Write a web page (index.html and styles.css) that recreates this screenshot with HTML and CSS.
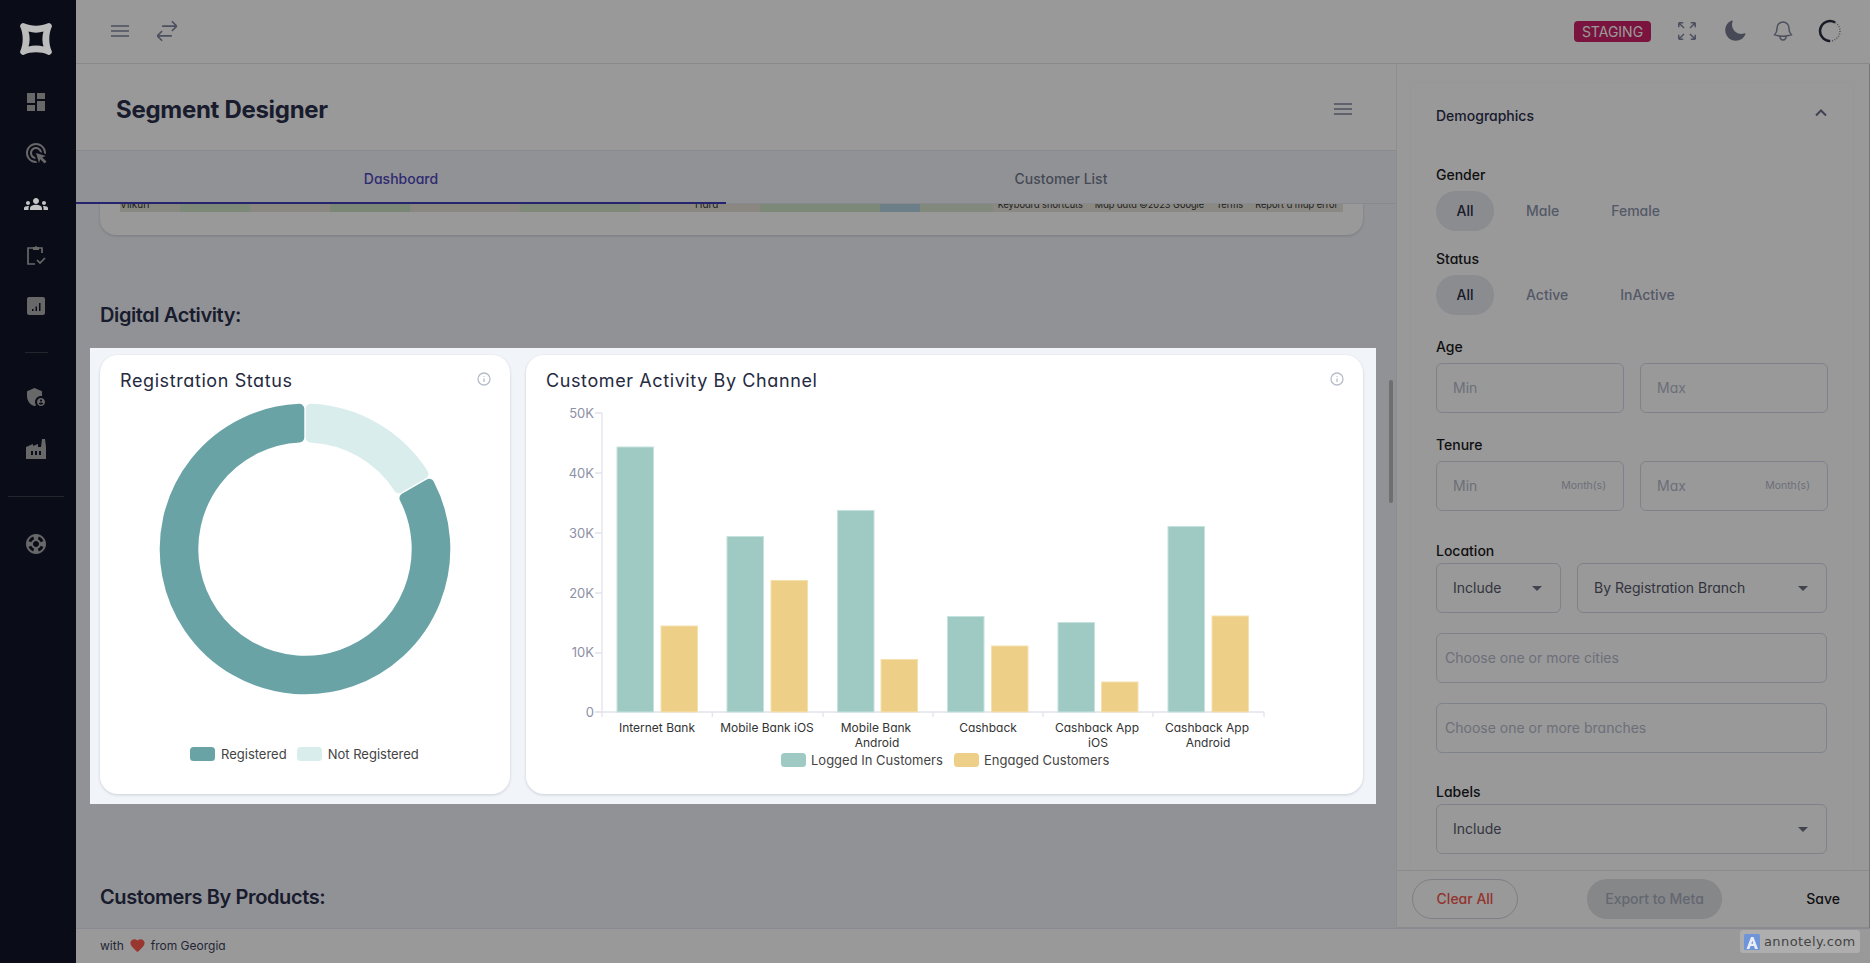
FILE: index.html
```html
<!DOCTYPE html>
<html lang="en">
<head>
<meta charset="utf-8">
<title>Segment Designer</title>
<link rel="stylesheet" href="styles.css">
</head>
<body>
<div class="shell">
  <aside class="sidebar">
    <svg class="logo raised" viewBox="0 0 32 32"><path fill-rule="evenodd" d="M4 .3C11 3.500 21 3.500 28 .3q1.500-.6 2.500.4l.8.8q1 1 .4 2.500C28.500 11 28.500 21 31.700 28q.6 1.500-.4 2.500l-.8.8q-1 1-2.500.4C21 28.500 11 28.500 4 31.700q-1.500.6-2.500-.4l-.8-.8q-1-1-.4-2.500C3.500 21 3.500 11 .3 4q-.6-1.500.4-2.500l.8-.8q1-1 2.500-.4ZM8.500 8.500C13 10 19 10 23.500 8.500C22 13 22 19 23.500 23.500C19 22 13 22 8.500 23.500C10 19 10 13 8.500 8.500Z"/></svg>
    <nav class="nav nav-main">
      <svg class="nav-icon" viewBox="0 0 24 24"><path d="M3 13h8V3H3v10zm0 8h8v-6H3v6zm10 0h8V11h-8v10zm0-18v6h8V3h-8z"/></svg>
      <svg class="nav-icon" viewBox="0 0 24 24"><path d="M11.71 17.99C8.53 17.84 6 15.22 6 12c0-3.31 2.69-6 6-6 3.22 0 5.84 2.53 5.99 5.71l-2.1-.63C15.48 9.31 13.89 8 12 8c-2.21 0-4 1.79-4 4 0 1.89 1.31 3.48 3.08 3.89l.63 2.1zM22 12c0 .3-.01.6-.04.9l-1.97-.59c.01-.1.01-.21.01-.31 0-4.42-3.58-8-8-8s-8 3.58-8 8 3.58 8 8 8c.1 0 .21 0 .31-.01l.59 1.97c-.3.03-.6.04-.9.04-5.52 0-10-4.48-10-10S6.48 2 12 2s10 4.48 10 10zm-3.77 4.26L22 15l-10-3 3 10 1.26-3.77 4.27 4.27 1.98-1.98-4.28-4.26z"/></svg>
      <svg class="nav-icon nav-active raised" viewBox="0 0 24 24"><path d="M12 12.75c1.63 0 3.07.39 4.24.9 1.08.48 1.76 1.56 1.76 2.73V18H6v-1.61c0-1.18.68-2.26 1.76-2.73 1.17-.52 2.61-.91 4.24-.91zM4 13c1.1 0 2-.9 2-2s-.9-2-2-2-2 .9-2 2 .9 2 2 2zm1.13 1.1c-.37-.06-.74-.1-1.13-.1-.99 0-1.93.21-2.78.58C.48 14.9 0 15.62 0 16.43V18h4.5v-1.61c0-.83.23-1.61.63-2.29zM20 13c1.1 0 2-.9 2-2s-.9-2-2-2-2 .9-2 2 .9 2 2 2zm4 3.43c0-.81-.48-1.53-1.22-1.85-.85-.37-1.79-.58-2.78-.58-.39 0-.76.04-1.13.1.4.68.63 1.46.63 2.29V18H24v-1.57zM12 6c1.66 0 3 1.34 3 3s-1.34 3-3 3-3-1.34-3-3 1.34-3 3-3z"/></svg>
      <svg class="nav-icon nav-stroke" viewBox="0 0 24 24"><path d="M18 10V5h-3M9 5H4v16h7"/><path class="nav-fillpart" d="M9 4h2a1 1 0 0 1 2 0h2v3H9z"/><path d="M13 17l3 3 5-5"/></svg>
      <svg class="nav-icon" viewBox="0 0 24 24"><path fill-rule="evenodd" d="M5 3h14c1.1 0 2 .9 2 2v14c0 1.1-.9 2-2 2H5c-1.100 0-2-.9-2-2V5c0-1.100.9-2 2-2zM8 15v2h1.500v-2zM11.500 12.500V17H13v-4.500zM15 9v8h1.500V9z"/></svg>
    </nav>
    <hr class="rule rule-short">
    <nav class="nav nav-sec">
      <svg class="nav-icon" viewBox="0 0 24 24"><path d="M17 11c.34 0 .67.04 1 .09V6.270L10.500 3 3 6.270v4.910c0 4.540 3.200 8.790 7.500 9.820.55-.13 1.080-.32 1.600-.55-.69-.98-1.100-2.170-1.100-3.450 0-3.310 2.690-6 6-6z"/><path d="M17 13c-2.210 0-4 1.790-4 4s1.790 4 4 4 4-1.790 4-4-1.790-4-4-4zm0 1.380c.62 0 1.120.51 1.120 1.120s-.51 1.120-1.120 1.120-1.120-.51-1.120-1.120.5-1.120 1.120-1.120zm0 5.370c-.93 0-1.740-.46-2.240-1.170.05-.72 1.510-1.080 2.240-1.080s2.190.36 2.240 1.080c-.5.71-1.310 1.170-2.240 1.170z"/></svg>
      <svg class="nav-icon" viewBox="0 0 24 24"><path fill-rule="evenodd" d="M22 10l-1-8h-3l-1 8h-3V7l-5 2V7l-7 3v12h20V10zM9 18H7v-4h2zm4 0h-2v-4h2zm4 0h-2v-4h2z"/></svg>
    </nav>
    <hr class="rule rule-long">
    <svg class="nav-icon" viewBox="0 0 24 24"><path d="M12 2C6.480 2 2 6.480 2 12s4.480 10 10 10 10-4.480 10-10S17.520 2 12 2zm7.460 7.120-2.780 1.150c-.51-1.360-1.580-2.440-2.950-2.940l1.150-2.780c2.100.8 3.770 2.470 4.580 4.570zM12 15c-1.660 0-3-1.340-3-3s1.340-3 3-3 3 1.340 3 3-1.340 3-3 3zM9.130 4.540l1.170 2.780c-1.380.5-2.470 1.590-2.980 2.970L4.540 9.130c.81-2.110 2.480-3.780 4.590-4.590zM4.540 14.870l2.780-1.150c.51 1.380 1.590 2.460 2.970 2.960l-1.170 2.780c-2.100-.81-3.770-2.480-4.580-4.590zm10.340 4.590-1.150-2.780c1.370-.51 2.450-1.590 2.950-2.970l2.780 1.170c-.81 2.100-2.480 3.770-4.580 4.580z"/></svg>
  </aside>

  <header class="topbar">
    <svg class="top-icon top-menu" viewBox="0 0 18 12"><path d="M0 1h18M0 6h18M0 11h18"/></svg>
    <svg class="top-icon top-swap" viewBox="0 0 24 24"><path d="M7.500 21L3 16.500m0 0L7.500 12M3 16.500h13.500m0-13.500L21 7.500m0 0L16.500 12M21 7.500H7.500"/></svg>
    <span class="badge-staging">STAGING</span>
    <svg class="top-icon top-action" viewBox="0 0 24 24"><path d="M3.750 3.750v4.500m0-4.500h4.500m-4.500 0L9 9M3.750 20.250v-4.500m0 4.500h4.500m-4.500 0L9 15M20.250 3.750h-4.500m4.500 0v4.500m0-4.500L15 9m5.250 11.250h-4.500m4.500 0v-4.500m0 4.500L15 15"/></svg>
    <svg class="top-action moon" viewBox="0 0 24 24"><path d="M9.528 1.718a.75.75 0 01.162.819A8.970 8.970 0 009 6a9 9 0 009 9 8.970 8.970 0 003.463-.69.75.75 0 01.981.980 10.503 10.503 0 01-9.694 6.460c-5.799 0-10.500-4.701-10.500-10.500 0-4.368 2.667-8.112 6.460-9.694a.75.75 0 01.818.162z"/></svg>
    <svg class="top-icon top-action" viewBox="0 0 24 24"><path d="M14.857 17.082a23.848 23.848 0 005.454-1.310A8.967 8.967 0 0118 9.750V9A6 6 0 006 9v.750a8.967 8.967 0 01-2.312 6.022c1.733.64 3.560 1.085 5.455 1.310m5.714 0a24.255 24.255 0 01-5.714 0m5.714 0a3 3 0 11-5.714 0"/></svg>
    <svg class="avatar" viewBox="0 0 24 24"><circle class="avatar-dash" cx="12" cy="12" r="10"/><path class="avatar-arc" d="M17 3.300A10 10 0 1 0 12 22"/></svg>
  </header>

  <main class="content">
    <div class="title-bar">
      <h1 class="page-title">Segment Designer</h1>
      <svg class="top-icon title-menu" viewBox="0 0 18 12"><path d="M0 1h18M0 6h18M0 11h18"/></svg>
    </div>
    <div class="tabs">
      <div class="tab tab-active">Dashboard</div>
      <div class="tab">Customer List</div>
    </div>
    <div class="scroll">
      <section class="map-card">
        <div class="map-strip">
          <span class="map-label map-left">Vilkuri</span>
          <span class="map-label map-mid">Hara</span>
          <span class="map-attrib"><span>Keyboard shortcuts</span><span>Map data ©2023 Google</span><span>Terms</span><span>Report a map error</span></span>
        </div>
      </section>
      <h2 class="section-title section-digital">Digital Activity:</h2>
      <div class="chart-grid">
        <article class="card">
          <div class="card-head">
            <h3 class="card-title">Registration Status</h3>
            <svg class="info" viewBox="0 0 14 14"><circle cx="7" cy="7" r="6"/><path d="M7 6.500v3.500M7 4v.8"/></svg>
          </div>
          <svg class="donut" viewBox="0 0 300 300">
            <g transform="translate(150 150)">
              <path class="slice slice-a" d="M124.250 -65.150A140.300 140.300 0 1 1 -5.700 -140.180L-5.700 -111.550A111.700 111.700 0 1 0 99.450 -50.840Z"/>
              <path class="slice slice-b" d="M5.700 -140.180A140.300 140.300 0 0 1 118.550 -75.030L93.750 -60.720A111.700 111.700 0 0 0 5.700 -111.550Z"/>
            </g>
          </svg>
          <div class="legend legend-donut">
            <span class="swatch swatch-a"></span><span class="legend-text">Registered</span>
            <span class="swatch swatch-b"></span><span class="legend-text">Not Registered</span>
          </div>
        </article>
        <article class="card">
          <div class="card-head">
            <h3 class="card-title">Customer Activity By Channel</h3>
            <svg class="info" viewBox="0 0 14 14"><circle cx="7" cy="7" r="6"/><path d="M7 6.500v3.500M7 4v.8"/></svg>
          </div>
          <svg class="bars" viewBox="526 405 837 389">
            <g class="axis">
              <path d="M602 413V717M595 413h7M595 473h7M595 533h7M595 593h7M595 653h7M595 712h7"/>
              <path d="M595 712H1264M712.300 712v5M823 712v5M933 712v5M1043 712v5M1153 712v5M1264 712v5"/>
            </g>
            <g class="y-labels">
              <text x="594" y="418">50K</text><text x="594" y="478">40K</text><text x="594" y="538">30K</text>
              <text x="594" y="598">20K</text><text x="594" y="657">10K</text><text x="594" y="717">0</text>
            </g>
            <g class="bar-a">
              <rect x="617" y="447" width="36.500" height="265"/><rect x="727" y="536.500" width="36.500" height="175.500"/>
              <rect x="837.500" y="510.500" width="36.500" height="201.500"/><rect x="947.500" y="616.500" width="36.500" height="95.500"/>
              <rect x="1058" y="622.500" width="36.500" height="89.500"/><rect x="1168" y="526.500" width="36.500" height="185.500"/>
            </g>
            <g class="bar-b">
              <rect x="661" y="626" width="36.500" height="86"/><rect x="771" y="580.500" width="36.500" height="131.500"/>
              <rect x="881" y="659.500" width="36.500" height="52.500"/><rect x="991.500" y="646" width="36.500" height="66"/>
              <rect x="1101.500" y="682" width="36.500" height="30"/><rect x="1212" y="616" width="36.500" height="96"/>
            </g>
            <g class="x-labels">
              <text x="657" y="732">Internet Bank</text>
              <text x="767" y="732">Mobile Bank iOS</text>
              <text x="876" y="732">Mobile Bank</text><text x="877" y="747">Android</text>
              <text x="988" y="732">Cashback</text>
              <text x="1097" y="732">Cashback App</text><text x="1098" y="747">iOS</text>
              <text x="1207" y="732">Cashback App</text><text x="1208" y="747">Android</text>
            </g>
            <rect class="legend-a" x="781" y="753" width="25" height="14" rx="3.500"/>
            <text class="legend-svg" x="811" y="765">Logged In Customers</text>
            <rect class="legend-b" x="954" y="753" width="25" height="14" rx="3.500"/>
            <text class="legend-svg" x="984" y="765">Engaged Customers</text>
          </svg>
        </article>
      </div>
      <h2 class="section-title section-products">Customers By Products:</h2>
      <div class="scroll-thumb"></div>
    </div>
  </main>

  <aside class="panel">
    <div class="panel-body">
      <div class="panel-card">
        <div class="panel-head">
          <span class="panel-title">Demographics</span>
          <svg class="chev" viewBox="0 0 12 8"><path d="M1 6.500L6 1.500l5 5"/></svg>
        </div>
        <div class="field-label label-gender">Gender</div>
        <div class="chips">
          <span class="chip chip-on">All</span><span class="chip">Male</span><span class="chip">Female</span>
        </div>
        <div class="field-label label-status">Status</div>
        <div class="chips">
          <span class="chip chip-on">All</span><span class="chip">Active</span><span class="chip">InActive</span>
        </div>
        <div class="field-label label-age">Age</div>
        <div class="pair">
          <div class="input input-num">Min</div>
          <div class="input input-num">Max</div>
        </div>
        <div class="field-label label-age">Tenure</div>
        <div class="pair">
          <div class="input input-num">Min<span class="unit">Month(s)</span></div>
          <div class="input input-num">Max<span class="unit">Month(s)</span></div>
        </div>
        <div class="field-label label-loc">Location</div>
        <div class="selects">
          <div class="input select select-small">Include<i class="caret"></i></div>
          <div class="input select select-wide">By Registration Branch<i class="caret"></i></div>
        </div>
        <div class="input input-multi">Choose one or more cities</div>
        <div class="input input-multi">Choose one or more branches</div>
        <div class="field-label label-loc">Labels</div>
        <div class="input select select-last">Include<i class="caret"></i></div>
      </div>
    </div>
    <div class="panel-foot">
      <button class="btn btn-clear">Clear All</button>
      <button class="btn btn-export">Export to Meta</button>
      <button class="btn btn-save">Save</button>
    </div>
  </aside>

  <footer class="foot">
    <span>with</span>
    <svg class="heart" viewBox="0 0 24 24"><path d="M12 21.350l-1.450-1.320C5.400 15.360 2 12.280 2 8.500 2 5.420 4.420 3 7.500 3c1.740 0 3.410.81 4.500 2.090C13.090 3.810 14.760 3 16.500 3 19.580 3 22 5.420 22 8.500c0 3.780-3.400 6.860-8.550 11.540L12 21.350z"/></svg>
    <span>from Georgia</span>
  </footer>

  <div class="spotlight"></div>
  <div class="annotely">
    <svg class="annotely-logo" viewBox="0 0 16 16"><rect width="16" height="16" rx="1.500"/><path d="M2.500 15L7 3h2.500l4.500 12h-3l-1-3H6.500l-1 3zM7.300 9.800h2L8.300 6.700z"/></svg>
    <span>annotely.com</span>
  </div>
</div>
</body>
</html>
```

FILE: styles.css
```css
* { box-sizing: border-box; }
html, body { margin: 0; height: 100%; overflow: hidden; }
body {
  font-family: Inter, "Noto Sans", "Liberation Sans", sans-serif;
  font-feature-settings: "cv11" 1;
  font-size: 14px;
  color: #2a2e4a;
  background: #f1f4f9;
}
h1, h2, h3 { margin: 0; }

.shell {
  position: relative;
  width: 1870px;
  height: 963px;
  overflow: hidden;
  display: grid;
  grid-template-columns: 76px 1320px 474px;
  grid-template-rows: 64px 864px 35px;
  grid-template-areas:
    "side top top"
    "side main panel"
    "side foot foot";
}

/* Sidebar */
.sidebar {
  grid-area: side;
  background: #111629;
  display: flex;
  flex-direction: column;
  align-items: center;
  padding: 23px 4px 0 0;
}
.raised { position: relative; z-index: 11; }
.logo { width: 32px; height: 32px; fill: #bcbcbc; flex: none; }
.nav { display: flex; flex-direction: column; align-items: center; }
.nav-main { margin-top: 35px; gap: 27px; }
.nav-sec { margin-top: 32px; gap: 28px; }
.nav-icon { width: 24px; height: 24px; fill: #adadad; flex: none; }
.nav-active { fill: #c4c4c4; }
.nav-stroke { fill: none; stroke: #adadad; stroke-width: 1.700; }
.nav-fillpart { fill: #adadad; stroke: none; }
.rule { border: 0; border-top: 1px solid #3c3f4c; margin: 0; flex: none; }
.rule-short { width: 23px; margin-top: 34px; }
.rule-long { width: 56px; margin-top: 35px; margin-bottom: 35px; }

/* Top bar */
.topbar {
  grid-area: top;
  background: #fff;
  border-bottom: 1px solid #e2e4e8;
  display: flex;
  align-items: center;
  padding: 0 28px 1px 35px;
}
.top-icon { fill: none; stroke: #80859f; stroke-width: 1.500; flex: none; }
.top-menu { width: 18px; height: 12px; }
.top-swap { width: 26px; height: 26px; margin-left: 25px; }
.badge-staging {
  margin-left: auto;
  background: #cb2269;
  color: #fff;
  font-size: 14px;
  line-height: 21px;
  width: 77px;
  text-align: center;
  border-radius: 4px;
}
.top-action { width: 24px; height: 24px; margin-left: 24px; flex: none; }
.moon { fill: #777b90; }
.avatar { width: 24px; height: 24px; margin-left: 23px; flex: none; fill: none; }
.avatar-dash { stroke: #8a8a8a; stroke-width: 1.500; stroke-dasharray: 1 1.500; }
.avatar-arc { stroke: #2b2e40; stroke-width: 2.500; }

/* Main column */
.content { grid-area: main; min-width: 0; display: flex; flex-direction: column; overflow: hidden; }
.title-bar {
  height: 87px;
  flex: none;
  background: #fff;
  border-bottom: 1px solid #e4e7ee;
  display: flex;
  align-items: center;
  justify-content: space-between;
  padding: 5px 44px 0 40px;
}
.page-title { font-size: 24px; font-weight: 700; color: #2b2f4c; letter-spacing: -.3px; }
.title-menu { width: 18px; height: 12px; margin-bottom: 2px; }
.tabs { height: 53px; flex: none; display: flex; background: #f2f4f8; }
.tab { display: flex; align-items: center; justify-content: center; flex: 1 1 670px; padding-top: 3px; font-size: 14px; color: #747b8f; font-weight: 500; border-bottom: 1px solid #e4e7ee; }
.tab-active { flex: 0 0 650px; color: #5147c0; border-bottom: 2px solid #413cb9; }

.scroll { position: relative; flex: 1; padding: 0 33px 0 24px; overflow: hidden; }
.map-card {
  height: 32px;
  margin-top: -1px;
  background: #fff;
  border-radius: 0 0 16px 16px;
  box-shadow: 0 1px 3px rgba(40, 50, 70, .2);
  padding: 0 20px;
}
.map-strip {
  position: relative;
  height: 9px;
  overflow: hidden;
  background: linear-gradient(90deg, #e2e3d6 0, #e2e3d6 60px, #cfe3c8 60px, #cfe3c8 130px, #e6e2d6 130px, #e6e2d6 210px, #cbe2c6 210px, #cbe2c6 290px, #e4e1d4 290px, #e4e1d4 400px, #d2e4cb 400px, #d2e4cb 520px, #e6e2d6 520px, #e6e2d6 640px, #cfe3c8 640px, #cfe3c8 760px, #b5d3e3 760px, #b5d3e3 800px, #d6e5cf 800px);
  font-size: 10px;
  line-height: 3px;
  color: #333;
}
.map-label { position: absolute; top: 0; }
.map-left { left: 0; }
.map-mid { left: 575px; }
.map-attrib {
  position: absolute;
  top: 0;
  right: 0;
  height: 9px;
  display: flex;
  gap: 12px;
  padding: 0 5px;
  font-size: 9.200px;
  background: #e6e4dc;
}
.section-title { font-size: 20px; line-height: 28px; font-weight: 600; color: #2b2f4c; letter-spacing: -.4px; }
.section-digital { margin-top: 66px; }
.section-products { margin-top: 89px; }
.chart-grid { display: grid; grid-template-columns: 410px 1fr; column-gap: 16px; margin-top: 26px; }
.card {
  height: 439px;
  background: #fff;
  border-radius: 18px;
  box-shadow: 0 1px 3px rgba(40, 50, 70, .18);
  overflow: hidden;
}
.card-head { height: 50px; display: flex; justify-content: space-between; align-items: flex-start; padding: 14px 19px 0 20px; }
.card-title { font-size: 18px; line-height: 24px; font-weight: 400; color: #252a40; letter-spacing: .6px; }
.info { width: 14px; height: 14px; margin-top: 3px; fill: none; stroke: #b6bcc8; stroke-width: 1.300; }
.donut { display: block; width: 300px; height: 300px; margin: -6px auto 0; overflow: visible; }
.slice { stroke-width: 10; stroke-linejoin: round; }
.slice-a { fill: #6aa3a6; stroke: #6aa3a6; }
.slice-b { fill: #daeded; stroke: #daeded; }
.legend { display: flex; align-items: center; }
.legend-donut { margin: 47px 0 0 90px; }
.swatch { width: 25px; height: 14px; border-radius: 3.500px; flex: none; }
.swatch-a { background: #6aa3a6; }
.swatch-b { background: #daeded; margin-left: 10px; }
.legend-text { margin-left: 6px; font-size: 13px; color: #444; }
.bars { display: block; width: 837px; height: 389px; }
.axis { fill: none; stroke: #e2e4ec; stroke-width: 1.300; }
.y-labels { font-size: 13px; fill: #8d90a6; text-anchor: end; }
.x-labels { font-size: 12px; fill: #333; text-anchor: middle; }
.bar-a { fill: #9fcac3; stroke: #c6e2dc; stroke-width: 1; }
.bar-b { fill: #edcf87; stroke: #f5e0b0; stroke-width: 1; }
.legend-a { fill: #9fcac3; }
.legend-b { fill: #edcf87; }
.legend-svg { font-size: 13px; fill: #444; }
.scroll-thumb {
  position: absolute;
  top: 176px;
  right: 3px;
  width: 4px;
  height: 123px;
  border-radius: 2px;
  background: #b9b9bb;
}

/* Right panel */
.panel { grid-area: panel; background: #fff; border-left: 1px solid #ebedf1; border-right: 1px solid #c4c4c4; display: flex; flex-direction: column; min-height: 0; }
.panel-body { flex: 1; min-height: 0; overflow: hidden; padding: 20px 17px 0 15px; }
.panel-card { height: 800px; padding: 21px 24px 0; box-shadow: 0 0 6px rgba(60, 70, 90, .025); }
.panel-head { display: flex; justify-content: space-between; align-items: center; height: 20px; }
.panel-title { font-size: 14px; font-weight: 500; color: #2b2f4c; }
.chev { width: 12px; height: 8px; margin-right: 1px; margin-bottom: 4px; fill: none; stroke: #6a6f8a; stroke-width: 2; }
.field-label { font-size: 14px; line-height: 20px; font-weight: 500; color: #1a1a1e; }
.label-gender { margin-top: 40px; }
.label-status { margin-top: 18px; }
.label-age { margin-top: 22px; }
.label-loc { margin-top: 30px; }
.input-multi + .label-loc { margin-top: 29px; }
.chips { display: flex; margin-top: 6px; }
.chip { height: 40px; width: 58px; display: flex; align-items: center; justify-content: center; border-radius: 20px; font-size: 14px; font-weight: 500; color: #8d94ad; margin-right: 16px; padding-bottom: 1px; }
.chip:nth-child(2), .chip:nth-child(3) { width: auto; padding: 0 16px 1px; }
.chip:nth-child(2) { margin-right: 20px; }
.chip-on { background: #e7e9ee; color: #2a2e45; }
.pair { display: grid; grid-template-columns: 188px 188px; column-gap: 16px; margin-top: 6px; }
.input {
  height: 50px;
  border: 1px solid #d5d9e8;
  border-radius: 6px;
  display: flex;
  align-items: center;
  font-size: 14px;
  color: #b5bacb;
  padding-bottom: 2px;
}
.input-num { padding-left: 16px; padding-right: 17px; justify-content: space-between; }
.unit { font-size: 10.500px; color: #b5bacb; }
.selects { display: grid; grid-template-columns: 125px 250px; column-gap: 16px; margin-top: 2px; }
.select { padding-left: 16px; padding-right: 18px; justify-content: space-between; color: #55586a; }
.select-last { width: 391px; margin-top: 2px; }
.caret { width: 0; height: 0; border: 5px solid transparent; border-top: 5px solid #6d7183; border-bottom: 0; margin-top: 2px; }
.input-multi { width: 391px; margin-top: 20px; padding-left: 8px; }
.panel-foot { height: 58px; flex: none; border-top: 1px solid #e7e9ee; border-bottom: 1px solid #e7e9ee; display: flex; align-items: center; padding: 0 28px 1px 15px; }
.btn { height: 40px; border-radius: 20px; font: inherit; font-size: 14px; font-weight: 500; border: 1px solid transparent; background: none; padding: 0; font-feature-settings: "cv11" 1; }
.btn-clear { width: 106px; border-color: #cfd3dd; color: #f5574d; }
.btn-export { width: 135px; margin-left: 69px; background: #dfe1e5; color: #a6acbd; }
.btn-save { margin-left: auto; color: #1a1a1e; }

/* Footer */
.foot { grid-area: foot; background: #fff; border-top: 1px solid #e4e7ee; display: flex; align-items: center; gap: 5px; padding: 0 0 1px 24px; font-size: 12px; color: #3b3f5c; }
.heart { width: 17px; height: 17px; fill: #ff5b4f; }

/* Dim layer with a cut-out around the highlighted charts */
.spotlight {
  position: absolute;
  left: 90px;
  top: 348px;
  width: 1286px;
  height: 456px;
  box-shadow: 0 0 0 2400px rgba(0, 0, 0, .4);
  pointer-events: none;
  z-index: 10;
}
.annotely {
  position: absolute;
  left: 1740px;
  top: 930px;
  width: 120px;
  height: 23px;
  z-index: 12;
  background: #aeaeae;
  border-radius: 3px;
  display: flex;
  align-items: center;
  padding-left: 4px;
  gap: 4px;
  font-family: "DejaVu Sans", sans-serif;
  font-feature-settings: normal;
  font-size: 13px;
  letter-spacing: .4px;
  color: #444;
}
.annotely-logo { width: 16px; height: 16px; flex: none; fill: #e8edf8; }
.annotely-logo rect { fill: #6f95d8; }
```
